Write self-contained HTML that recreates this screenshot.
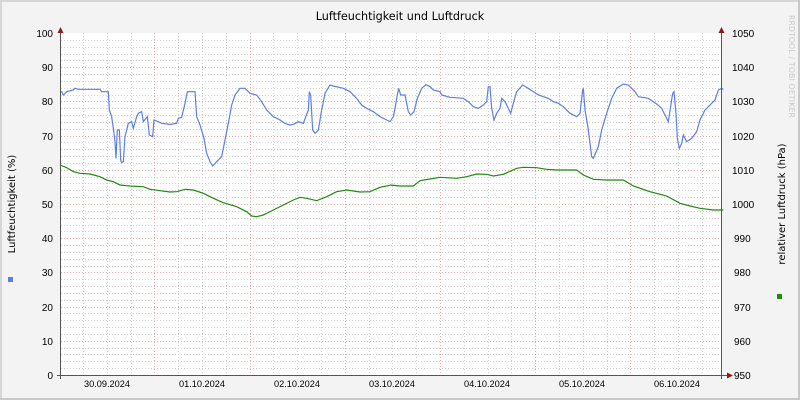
<!DOCTYPE html>
<html><head><meta charset="utf-8"><style>
html,body{margin:0;padding:0;background:#f3f3f3;}
svg{display:block;font-family:"DejaVu Sans","Liberation Sans",sans-serif;}
</style></head><body>
<svg id="s" width="800" height="400" xmlns="http://www.w3.org/2000/svg">
<rect x="0" y="0" width="800" height="400" fill="#f3f3f3"/>
<rect x="0" y="0" width="800" height="2" fill="#d6d6d6"/>
<rect x="0" y="0" width="2" height="400" fill="#d6d6d6"/>
<rect x="798" y="0" width="2" height="400" fill="#c8c8c8"/>
<rect x="0" y="398" width="800" height="2" fill="#c8c8c8"/>
<rect x="61" y="33" width="661" height="342" fill="#ffffff"/>
<g id="grid"></g>
<g transform="translate(60,80) scale(0.3333333)">
<polyline fill="none" stroke="#5b7fe6" stroke-width="3.6" stroke-linejoin="miter" points="0,35 5,35 10,45 20,35 40,30 45,25 55,28 120,28 125,35 145,35 148,90 155,110 160,145 165,185 168,235 172,150 178,150 182,240 185,248 190,245 195,170 205,130 215,125 220,145 230,110 235,100 245,95 250,125 262,110 268,165 278,170 282,120 295,125 305,130 330,133 350,130 355,115 365,112 375,70 382,35 405,35 410,110 420,135 432,175 440,220 450,245 458,258 470,245 485,230 495,180 505,130 515,75 525,45 540,25 555,25 570,40 590,45 605,65 620,90 640,110 660,120 675,130 690,135 700,133 715,125 730,130 745,90 748,35 752,45 758,150 765,160 775,150 785,90 795,40 810,15 820,18 850,25 870,35 890,55 905,75 920,85 940,95 960,110 980,120 990,125"/>
<polyline fill="none" stroke="#1e8c0e" stroke-width="3.6" points="0,255 20,263 40,275 60,280 90,282 120,290 140,300 160,305 180,315 210,318 250,320 270,328 300,332 330,336 350,335 375,328 400,330 430,340 460,355 490,368 530,380 560,395 575,408 590,410 610,405 640,390 670,375 700,360 720,352 740,355 770,362 800,350 830,335 860,330 900,336 930,335 960,322 990,316"/>
</g>
<g transform="translate(390,80) scale(0.3333333)">
<polyline fill="none" stroke="#5b7fe6" stroke-width="3.6" points="0,125 10,110 15,85 22,45 26,25 32,45 45,45 55,95 62,105 72,95 82,55 95,25 108,14 120,20 130,30 150,35 155,45 180,52 220,55 235,65 250,80 265,85 280,75 290,65 295,20 300,20 305,85 312,120 320,100 330,85 335,55 345,65 355,85 362,100 370,70 380,35 398,15 410,22 430,35 445,45 475,55 490,65 505,70 520,80 540,100 560,110 570,100 578,30 580,25 585,90 595,150 605,230 610,235 625,200 635,150 650,100 665,55 680,25 700,12 715,15 735,35 745,50 775,55 800,72 815,85 825,105 835,125 848,40 852,35 858,100 862,175 868,205 875,190 880,165 890,185 905,175 920,155 930,120 945,90 960,75 975,60 985,30 995,25 1000,28"/>
<polyline fill="none" stroke="#1e8c0e" stroke-width="3.6" points="0,315 30,318 70,318 90,302 120,297 150,292 200,295 230,290 260,282 290,283 310,288 340,283 380,265 400,262 440,263 470,268 500,270 560,270 580,285 610,298 650,300 700,300 730,318 780,335 830,348 870,370 900,378 930,385 970,390 1000,390"/>
</g>
<line x1="60.5" y1="28" x2="60.5" y2="379" stroke="#555" stroke-width="1"/>
<line x1="721.5" y1="28" x2="721.5" y2="379" stroke="#555" stroke-width="1"/>
<line x1="57" y1="375.5" x2="727" y2="375.5" stroke="#555" stroke-width="1"/>
<polygon points="57.5,33 63.5,33 60.5,27" fill="#8b1a1a"/>
<polygon points="718.5,33 724.5,33 721.5,27" fill="#8b1a1a"/>
<polygon points="727,372.5 727,378.5 733,375.5" fill="#8b1a1a"/>
<text x="400" y="20" text-anchor="middle" font-size="11.2" fill="#000">Luftfeuchtigkeit und Luftdruck</text>
<g font-size="10" fill="#000" text-anchor="end" font-family="Liberation Sans, sans-serif">
<text x="53" y="37">100</text><text x="53" y="71">90</text><text x="53" y="105">80</text><text x="53" y="140">70</text><text x="53" y="174">60</text><text x="53" y="208">50</text><text x="53" y="242">40</text><text x="53" y="276">30</text><text x="53" y="311">20</text><text x="53" y="345">10</text><text x="53" y="379">0</text>
</g>
<g font-size="10" fill="#000" font-family="Liberation Sans, sans-serif">
<text x="732" y="37">1050</text><text x="732" y="71">1040</text><text x="732" y="105">1030</text><text x="732" y="140">1020</text><text x="732" y="174">1010</text><text x="732" y="208">1000</text><text x="734" y="242">990</text><text x="734" y="276">980</text><text x="734" y="311">970</text><text x="734" y="345">960</text><text x="734" y="379">950</text>
</g>
<g font-size="9.2" fill="#000" text-anchor="middle" font-family="Liberation Sans, sans-serif">
<text x="107" y="387">30.09.2024</text><text x="202" y="387">01.10.2024</text><text x="297" y="387">02.10.2024</text><text x="392" y="387">03.10.2024</text><text x="487" y="387">04.10.2024</text><text x="582" y="387">05.10.2024</text><text x="677" y="387">06.10.2024</text>
</g>
<text transform="translate(15,204) rotate(-90)" text-anchor="middle" font-size="10" fill="#000">Luftfeuchtigkeit (%)</text>
<text transform="translate(785,204) rotate(-90)" text-anchor="middle" font-size="10" fill="#000">relativer Luftdruck (hPa)</text>
<text transform="translate(789,15) rotate(90)" font-size="7.5" fill="#c8c8c8" letter-spacing="0.3">RRDTOOL / TOBI OETIKER</text>
<rect x="8" y="277" width="5" height="5" fill="#5b7fe6"/>
<rect x="777" y="294" width="5" height="5" fill="#1e8c0e"/>
</svg>
<script>
var g=document.getElementById('grid'),h='';
for(var k=1;k<50;k++){var y=375-k*6.84;var maj=k%5==0;
h+='<line x1="61" x2="722" y1="'+(Math.round(y)+0.5)+'" y2="'+(Math.round(y)+0.5)+'" stroke="'+(maj?'#e6a8a8':'#cfcfcf')+'" stroke-dasharray="1,2"/>';}
for(var x=59.1+23.8;x<722;x+=23.8){var d=Math.round((x-154.3)/95.2);var maj=Math.abs(x-(154.3+d*95.2))<2;
h+='<line y1="33" y2="375" x1="'+(Math.round(x)+0.5)+'" x2="'+(Math.round(x)+0.5)+'" stroke="'+(maj?'#e6a8a8':'#cfcfcf')+'" stroke-dasharray="1,2"/>';}
g.innerHTML=h;
</script>
</body></html>
